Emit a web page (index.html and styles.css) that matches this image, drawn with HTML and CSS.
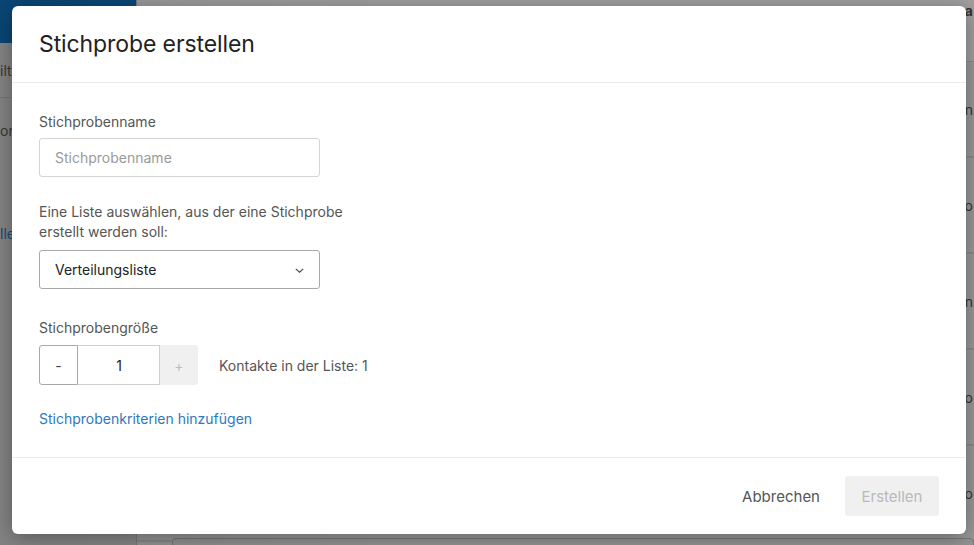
FILE: index.html
```html
<!DOCTYPE html>
<html lang="de">
<head>
<meta charset="utf-8">
<title>Stichprobe erstellen</title>
<link rel="stylesheet" href="styles.css">
</head>
<body>
<div class="app">
  <aside class="sidebar">
    <div class="brand"></div>
    <div class="side-row side-row--a"><span class="side-text">ilt</span></div>
    <div class="side-row side-row--b"><span class="side-text">ori</span></div>
    <div class="side-row side-row--c"><span class="side-link">lle</span></div>
  </aside>
  <main class="main">
    <div class="topstrip"><span class="row-text row-text--bold">a</span></div>
    <div class="table">
      <div class="trow"><span class="row-text">n</span></div>
      <div class="trow"><span class="row-text">o</span></div>
      <div class="trow"><span class="row-text">n</span></div>
      <div class="trow"><span class="row-text">o</span></div>
      <div class="trow"><span class="row-text">o</span></div>
    </div>
    <div class="card"></div>
  </main>
</div>

<div class="backdrop"></div>

<div class="modal" role="dialog" aria-labelledby="modal-title">
  <header class="modal-header">
    <h1 class="modal-title" id="modal-title">Stichprobe erstellen</h1>
  </header>
  <section class="modal-body">
    <label class="field-label" for="name">Stichprobenname</label>
    <input class="text-input" id="name" type="text" placeholder="Stichprobenname">

    <label class="field-label field-label--wrap">Eine Liste auswählen, aus der eine Stichprobe erstellt werden soll:</label>
    <div class="select">
      <span class="select-value">Verteilungsliste</span>
      <svg class="chevron" width="9" height="5" viewBox="0 0 9 5"><path d="M0.8 0.8 L4.5 4.2 L8.2 0.8" fill="none" stroke="#444" stroke-width="1.1"/></svg>
    </div>

    <label class="field-label field-label--gap">Stichprobengröße</label>
    <div class="size-row">
      <div class="stepper">
        <button class="step step--minus" type="button">-</button>
        <div class="step-value">1</div>
        <button class="step step--plus" type="button">+</button>
      </div>
      <span class="count">Kontakte in der Liste: 1</span>
    </div>

    <a class="link" href="#">Stichprobenkriterien hinzufügen</a>
  </section>
  <footer class="modal-footer">
    <button class="btn btn--ghost" type="button">Abbrechen</button>
    <button class="btn btn--disabled" type="button">Erstellen</button>
  </footer>
</div>
</body>
</html>
```

FILE: styles.css
```css
* { box-sizing: border-box; }

html, body {
  margin: 0;
  padding: 0;
  width: 974px;
  height: 545px;
  overflow: hidden;
}

body {
  font-family: "Inter", "Roboto", "Liberation Sans", sans-serif;
  background: #8e8e8e;
  position: relative;
}

/* ---------- background app (already dimmed) ---------- */
.app {
  display: flex;
  height: 545px;
}

.sidebar {
  width: 137px;
  background: #8c8c8c;
  border-right: 1px solid #7d7d7d;
  display: flex;
  flex-direction: column;
}

.brand {
  height: 43px;
  background: #0b4a7c;
}

.side-row {
  display: flex;
  align-items: center;
  font-size: 14px;
  color: #3a3a3a;
}
.side-row--a {
  height: 55px;
  border-bottom: 1px solid #7e7e7e;
}
.side-row--b { height: 64px; }
.side-row--c {
  height: 150px;
  align-items: flex-start;
  padding-top: 63px;
}

.side-text { margin-left: 0; }
.side-link { margin-left: 0; color: #1c4f7a; }

.main {
  flex: 1;
  background: #999999;
  display: flex;
  flex-direction: column;
  position: relative;
}

.topstrip {
  height: 62px;
  background: #a0a0a0;
  border-bottom: 1px solid #8c8c8c;
  display: flex;
  justify-content: flex-end;
  padding-top: 2px;
  padding-right: 1px;
}

.table {
  display: flex;
  flex-direction: column;
}

.trow {
  height: 96px;
  border-bottom: 1px solid #8c8c8c;
  display: flex;
  justify-content: flex-end;
  align-items: center;
  padding-right: 1px;
  box-shadow: inset 0 -24px 0 -23px #8c8c8c;
}

.row-text {
  font-size: 14px;
  color: #333;
}
.row-text--bold { font-weight: 700; }

.card {
  position: absolute;
  left: 35px;
  right: 0;
  top: 538px;
  height: 20px;
  border: 1px solid #7a7a7a;
  border-radius: 4px;
  background: #959595;
}

.backdrop {
  position: absolute;
  inset: 0;
  background: linear-gradient(90deg, rgba(0,0,0,0.06), rgba(0,0,0,0) 40%);
}

/* ---------- modal ---------- */
.modal {
  position: absolute;
  left: 12px;
  top: 6px;
  width: 954px;
  height: 528px;
  background: #ffffff;
  border-radius: 6px;
  box-shadow: 0 4px 22px rgba(0,0,0,0.35);
  display: flex;
  flex-direction: column;
}

.modal-header {
  height: 77px;
  border-bottom: 1px solid #ebebeb;
  display: flex;
  align-items: center;
  padding: 0 27px;
}

.modal-title {
  margin: 0;
  font-size: 23px;
  font-weight: 400;
  color: #222;
  letter-spacing: -0.1px;
}

.modal-body {
  flex: 1;
  padding: 29px 27px 0;
  display: flex;
  flex-direction: column;
  align-items: flex-start;
  border-bottom: 1px solid #ebebeb;
}

.field-label {
  font-size: 14px;
  line-height: 20px;
  color: #555;
  margin-bottom: 6px;
}

.field-label--wrap {
  margin-top: 25px;
  margin-bottom: 8px;
  max-width: 315px;
}

.field-label--gap {
  margin-top: 29px;
  margin-bottom: 7px;
}

.text-input {
  width: 281px;
  height: 39px;
  border: 1px solid #d4d4d4;
  border-radius: 3px;
  padding: 0 15px;
  font-family: inherit;
  font-size: 14px;
  color: #222;
  outline: none;
}
.text-input::placeholder { color: #9a9a9a; }

.select {
  width: 281px;
  height: 39px;
  border: 1px solid #a9a9a9;
  border-radius: 3px;
  padding: 0 15px 0 15px;
  display: flex;
  align-items: center;
  justify-content: space-between;
}

.select-value {
  font-size: 14px;
  color: #222;
}

.chevron { margin-top: 1px; }

.size-row {
  display: flex;
  align-items: center;
  gap: 21px;
}

.stepper {
  display: flex;
  height: 40px;
}

.step {
  width: 39px;
  height: 40px;
  font-family: inherit;
  font-size: 14px;
  padding: 0;
  cursor: pointer;
}

.step--minus {
  background: #fff;
  border: 1px solid #a9a9a9;
  border-radius: 3px 0 0 3px;
  color: #444;
}

.step-value {
  width: 82px;
  height: 40px;
  border-top: 1px solid #cfcfcf;
  border-bottom: 1px solid #cfcfcf;
  display: flex;
  align-items: center;
  justify-content: center;
  font-size: 14px;
  color: #222;
  box-shadow: inset -1px 0 0 #cfcfcf;
}

.step--plus {
  background: #f0f0f0;
  border: none;
  border-radius: 0 3px 3px 0;
  color: #bdbdbd;
  width: 38px;
}

.count {
  font-size: 14px;
  color: #555;
}

.link {
  margin-top: 24px;
  font-size: 14px;
  line-height: 20px;
  color: #2e78bd;
  text-decoration: none;
}

.modal-footer {
  height: 76px;
  display: flex;
  align-items: center;
  justify-content: flex-end;
  padding: 0 27px;
  gap: 8px;
}

.btn {
  height: 40px;
  font-family: inherit;
  font-size: 15px;
  border: none;
  border-radius: 3px;
  padding: 0 17px;
  cursor: pointer;
}

.btn--ghost {
  background: transparent;
  color: #555;
}

.btn--disabled {
  background: #f0f0f0;
  color: #b9b9b9;
  width: 94px;
  padding: 0;
}
```
